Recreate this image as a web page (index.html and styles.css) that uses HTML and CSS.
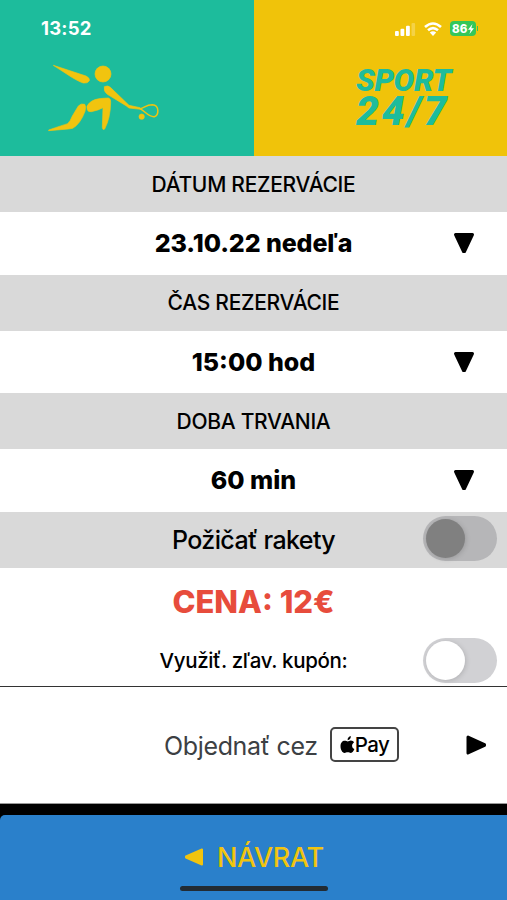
FILE: index.html
```html
<!DOCTYPE html>
<html lang="sk">
<head>
    <meta charset="UTF-8">
    <meta name="viewport" content="width=device-width, initial-scale=1.0">
    <title>Sport 24/7 - Rezervácia</title>
    <link rel="stylesheet" href="styles.css">
</head>
<body>
    <header class="header">
        <div class="header-left">
            <span class="clock">13:52</span>
            <svg class="player" width="112" height="70" viewBox="0 0 336 210">
                <circle cx="165" cy="42" r="24"/>
                <path d="M16 16 L114 48 Q126 54 124 62 Q119 71 106 69 Q95 66 70 51Z"/>
                <path d="M169 80 Q180 75 187 82 L243 136 L276 143 L278 148 L243 144 L234 137 L178 103 Q166 94 169 80Z"/>
                <path d="M118 149 Q113 139 124 129 Q138 116 165 115 L181 114 Q189 116 188 127 Q187 175 170 207 Q164 212 163 202 L165 143 Q151 151 130 155 Q119 156 118 149Z"/>
                <path d="M91 138 Q99 129 110 133 Q115 139 111 154 Q97 192 74 205 L61 207 L2 212 L2 210 Q46 195 59 191 Q67 184 73 168Z"/>
                <path class="racket" d="M276 146 C290 144 293 134 313 134 C335 135 333 166 319 170 C303 172 292 154 276 146Z"/>
                <circle cx="281" cy="170" r="8"/>
            </svg>
        </div>
        <div class="header-right">
            <div class="status">
                <svg class="signal" width="22" height="14" viewBox="0 0 22 14">
                    <rect x="1" y="9" width="3.8" height="5" rx="1"/>
                    <rect x="6.5" y="6.7" width="3.8" height="7.3" rx="1"/>
                    <rect x="12" y="3.8" width="3.8" height="10.2" rx="1"/>
                    <rect x="17.5" y="1" width="3.6" height="13" rx="1" opacity=".25"/>
                </svg>
                <svg class="wifi" width="18" height="14" viewBox="0 0 18 14">
                    <path d="M1 5 Q9 -2 17 5M4 8.3 Q9 4 14 8.3" fill="none" stroke="#fff" stroke-width="2.6"/>
                    <path d="M5.8 10.6 Q9 8 12.2 10.6 L9 14Z"/>
                </svg>
                <div class="battery">
                    <span>86</span>
                    <svg width="6" height="10" viewBox="0 0 6 10"><path d="M4.5 0 L0 5.7 H2.7 L1.5 10 L6 4.3 H3.3Z"/></svg>
                </div>
                <div class="battery-tip"></div>
            </div>
            <div class="logo">
                <span class="logo-top">SPORT</span>
                <span class="logo-bottom">24/7</span>
            </div>
        </div>
    </header>

    <main>
        <div class="label-row"><span>DÁTUM REZERVÁCIE</span></div>
        <div class="value-row">
            <span class="date">23.10.22 nedeľa</span>
            <svg class="arrow" width="22" height="22" viewBox="0 0 22 22"><path d="M2.5 2.5 H19.5 L11.5 19.5 H10.5Z"/></svg>
        </div>
        <div class="label-row"><span>ČAS REZERVÁCIE</span></div>
        <div class="value-row">
            <span>15:00 hod</span>
            <svg class="arrow" width="22" height="22" viewBox="0 0 22 22"><path d="M2.5 2.5 H19.5 L11.5 19.5 H10.5Z"/></svg>
        </div>
        <div class="label-row"><span>DOBA TRVANIA</span></div>
        <div class="value-row">
            <span>60 min</span>
            <svg class="arrow" width="22" height="22" viewBox="0 0 22 22"><path d="M2.5 2.5 H19.5 L11.5 19.5 H10.5Z"/></svg>
        </div>
        <div class="label-row rackets">
            <span>Požičať rakety</span>
            <div class="switch disabled"></div>
        </div>
        <div class="price"><span>CENA: 12€</span></div>
        <div class="coupon">
            <span>Využiť. zľav. kupón:</span>
            <div class="switch"></div>
        </div>
        <div class="order">
            <span class="order-text">Objednať cez</span>
            <div class="apple-pay">
                <svg width="15" height="18" viewBox="0 0 15 18">
                    <path d="M7.6 4.3 C7.3 2 9 .3 10.8 0 C11.1 2.2 9.5 4.1 7.6 4.3Z"/>
                    <path d="M7.6 5.5 C8.8 5.5 9.3 4.6 10.9 4.6 C12.3 4.6 13.4 5.3 14 6.4 C11 8.2 11.8 12 14.4 13 C13.5 15 12.4 16.9 10.9 16.9 C9.6 16.9 9.2 16.2 7.7 16.2 C6.2 16.2 5.8 16.9 4.5 16.9 C2.3 16.9 .5 13.4 .5 10.2 C.5 6.8 2.5 4.8 4.7 4.8 C6.1 4.8 7 5.5 7.6 5.5Z"/>
                </svg>
                <span>Pay</span>
            </div>
            <svg class="arrow" width="22" height="20" viewBox="0 0 22 20"><path d="M3 2 L19.5 9.6 V10.4 L3 18Z"/></svg>
        </div>
    </main>

    <footer class="footer">
        <div class="back">
            <svg width="20" height="18" viewBox="0 0 20 18"><path d="M18 1.5 V16.5 L2 9.5 V8.5Z"/></svg>
            <span>NÁVRAT</span>
        </div>
        <div class="home-bar"></div>
    </footer>
</body>
</html>
```
FILE: styles.css
```css
* {
    box-sizing: border-box;
}
body {
    margin: 0;
    background-color: #000;
    color: #000;
    font-family: Inter, "Liberation Sans", sans-serif;
    height: 900px;
    overflow: hidden;
}
svg {
    display: block;
    flex-shrink: 0;
}
span {
    white-space: nowrap;
}
.header {
    display: flex;
    height: 156px;
}
.header-left {
    width: 254px;
    background-color: #1dbc9c;
    padding: 17px 0 0 41px;
}
.header-right {
    flex: 1;
    background-color: #f0c30a;
    padding-top: 21px;
}
.clock {
    display: block;
    height: 22px;
    line-height: 22px;
    font-size: 18.5px;
    letter-spacing: 0.2px;
    font-weight: 700;
    color: #fff;
}
.player {
    margin: 21px 0 0 7px;
    overflow: visible;
    fill: #f1c40f;
    stroke: #f1c40f;
    stroke-width: 2;
    stroke-linejoin: round;
}
.racket {
    fill: none;
    stroke-width: 4.5;
}
.status {
    display: flex;
    align-items: center;
    margin-left: 140px;
    height: 15px;
    fill: #fff;
}
.wifi {
    margin-left: 8px;
}
.battery {
    display: flex;
    align-items: center;
    margin-left: 8px;
    width: 26px;
    height: 15px;
    padding-left: 2px;
    border-radius: 4px;
    background-color: #34c759;
    color: #fff;
    font-size: 11.5px;
    font-weight: 800;
}
.battery svg {
    margin-left: 1px;
}
.battery-tip {
    width: 1px;
    height: 5px;
    margin-left: 1px;
    background-color: #34c759;
}
.logo {
    display: flex;
    flex-direction: column;
    margin: 29px 0 0 102px;
    color: #1dbc9c;
    font-family: Roboto, sans-serif;
    font-style: italic;
    font-weight: 900;
}
.logo-top {
    height: 31px;
    line-height: 31px;
    font-size: 31px;
    letter-spacing: -0.4px;
}
.logo-bottom {
    height: 31px;
    line-height: 31px;
    font-size: 41px;
    letter-spacing: 2.6px;
}
.label-row {
    display: flex;
    align-items: center;
    justify-content: center;
    position: relative;
    height: 56px;
    background-color: #d9d9d9;
    font-size: 21px;
    font-weight: 500;
    letter-spacing: -0.28px;
}
.value-row {
    display: flex;
    align-items: center;
    justify-content: center;
    position: relative;
    height: 62.6px;
    background-color: #fff;
    font-size: 25px;
    font-weight: 800;
}
.date {
    letter-spacing: -0.1px;
}
.arrow {
    position: absolute;
    right: 32px;
    fill: #000;
    stroke: #000;
    stroke-width: 3;
    stroke-linejoin: round;
}
.rackets {
    font-size: 25px;
    letter-spacing: -0.6px;
}
.switch {
    position: absolute;
    right: 10px;
    width: 74px;
    height: 45px;
    border-radius: 23px;
    background-color: #d1d1d4;
}
.switch::before {
    content: "";
    display: block;
    width: 39px;
    height: 39px;
    margin: 3px;
    border-radius: 50%;
    background-color: #fff;
    box-shadow: 1px 1px 5px rgba(0, 0, 0, 0.15);
}
.rackets .switch {
    top: 4px;
}
.switch.disabled {
    background-color: #b6b6b8;
}
.switch.disabled::before {
    background-color: #808080;
}
.price {
    display: flex;
    align-items: center;
    justify-content: center;
    height: 67px;
    background-color: #fff;
    color: #e74c3c;
    font-size: 31px;
    font-weight: 800;
}
.coupon {
    display: flex;
    align-items: center;
    justify-content: center;
    position: relative;
    height: 52px;
    background-color: #fff;
    border-bottom: 1px solid #333;
    font-size: 20.5px;
    font-weight: 500;
    letter-spacing: -0.35px;
}
.order {
    display: flex;
    align-items: center;
    position: relative;
    height: 117px;
    padding-left: 164px;
    background-color: #fff;
    border-bottom: 1px solid #999;
}
.order-text {
    width: 166px;
    padding-top: 2px;
    font-size: 25px;
    letter-spacing: -0.35px;
    color: #3c4043;
}
.apple-pay {
    display: flex;
    align-items: center;
    justify-content: center;
    width: 69px;
    height: 35px;
    border: 2px solid #444;
    border-radius: 5px;
    font-size: 20.5px;
    font-weight: 500;
    letter-spacing: -0.6px;
}
.order .arrow {
    right: 20px;
}
.footer {
    height: 85px;
    margin-top: 11px;
    border-top-left-radius: 5px;
    background-color: #2a80cb;
}
.back {
    display: flex;
    align-items: center;
    height: 71px;
    padding: 14px 0 0 184px;
    color: #f1c40f;
    fill: #f1c40f;
    stroke: #f1c40f;
    stroke-width: 2;
    stroke-linejoin: round;
    font-size: 27px;
    font-weight: 500;
    letter-spacing: -0.3px;
}
.back span {
    margin-left: 13px;
}
.home-bar {
    width: 148px;
    height: 5px;
    margin: 0 auto;
    border-radius: 3px;
    background-color: #222b33;
}
```
